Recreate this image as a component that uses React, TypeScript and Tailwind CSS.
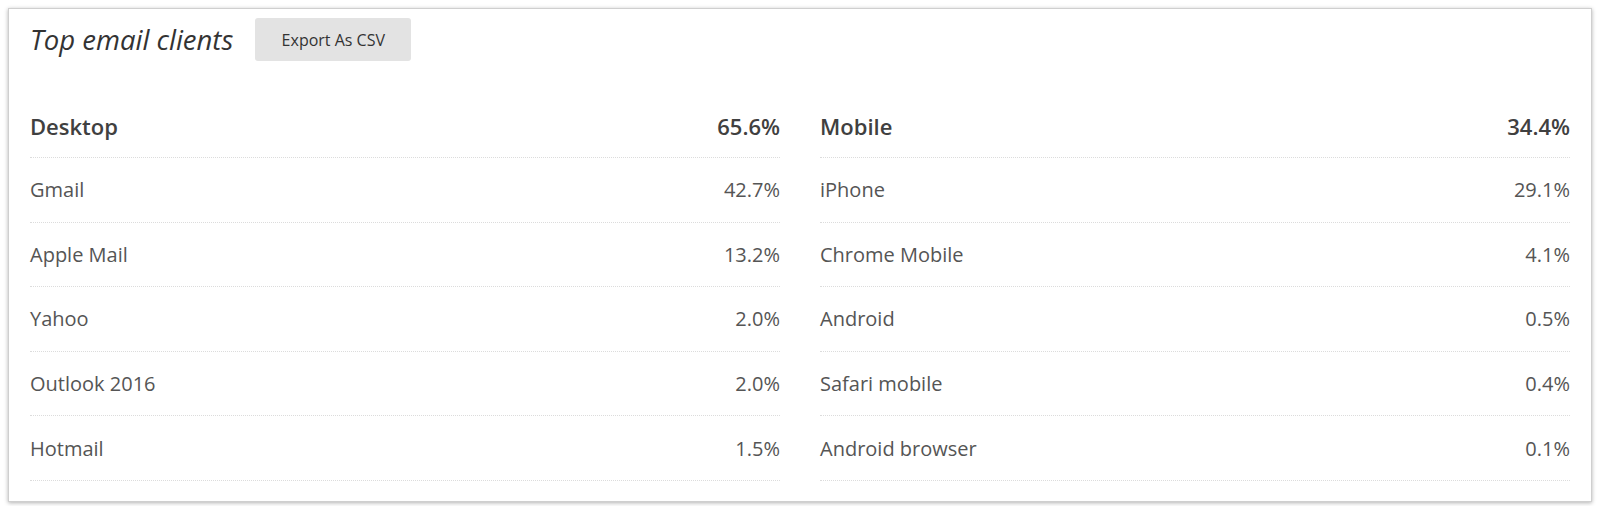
const desktop = [
  { name: "Gmail", pct: "42.7%" },
  { name: "Apple Mail", pct: "13.2%" },
  { name: "Yahoo", pct: "2.0%" },
  { name: "Outlook 2016", pct: "2.0%" },
  { name: "Hotmail", pct: "1.5%" },
];

const mobile = [
  { name: "iPhone", pct: "29.1%" },
  { name: "Chrome Mobile", pct: "4.1%" },
  { name: "Android", pct: "0.5%" },
  { name: "Safari mobile", pct: "0.4%" },
  { name: "Android browser", pct: "0.1%" },
];

function ClientColumn({ title, total, rows }: { title: string; total: string; rows: { name: string; pct: string }[] }) {
  return (
    <div className="flex flex-col">
      {/* header row */}
      <div className="flex h-[64px] items-center justify-between border-b border-dotted border-[#dcdcdc] pt-px text-[22px] font-semibold text-[#404040]">
        <span>{title}</span>
        <span>{total}</span>
      </div>
      {rows.map((r) => (
        <div
          key={r.name}
          className="flex h-[64.6px] items-center justify-between border-b border-dotted border-[#dcdcdc] pt-px text-[20px] text-[#555]"
        >
          <span>{r.name}</span>
          <span>{r.pct}</span>
        </div>
      ))}
    </div>
  );
}

export default function App() {
  return (
    <div className="min-h-[506px] bg-white p-2 font-['Open_Sans',sans-serif]">
      <div className="border border-[#cfcfcf] bg-white px-[21px] pt-[9px] pb-[20px] shadow-[0_1px_4px_rgba(0,0,0,0.3)]">
        {/* title row */}
        <div className="flex items-center gap-[22px]">
          <h2 className="text-[27.5px] italic text-[#333]">Top email clients</h2>
          <button className="h-[43px] w-[156px] rounded-[3px] bg-[#e3e3e3] text-[16px] text-[#333]">
            Export As CSV
          </button>
        </div>

        <div className="mt-[33px] grid grid-cols-2 gap-[40px]">
          <ClientColumn title="Desktop" total="65.6%" rows={desktop} />
          <ClientColumn title="Mobile" total="34.4%" rows={mobile} />
        </div>
      </div>
    </div>
  );
}
